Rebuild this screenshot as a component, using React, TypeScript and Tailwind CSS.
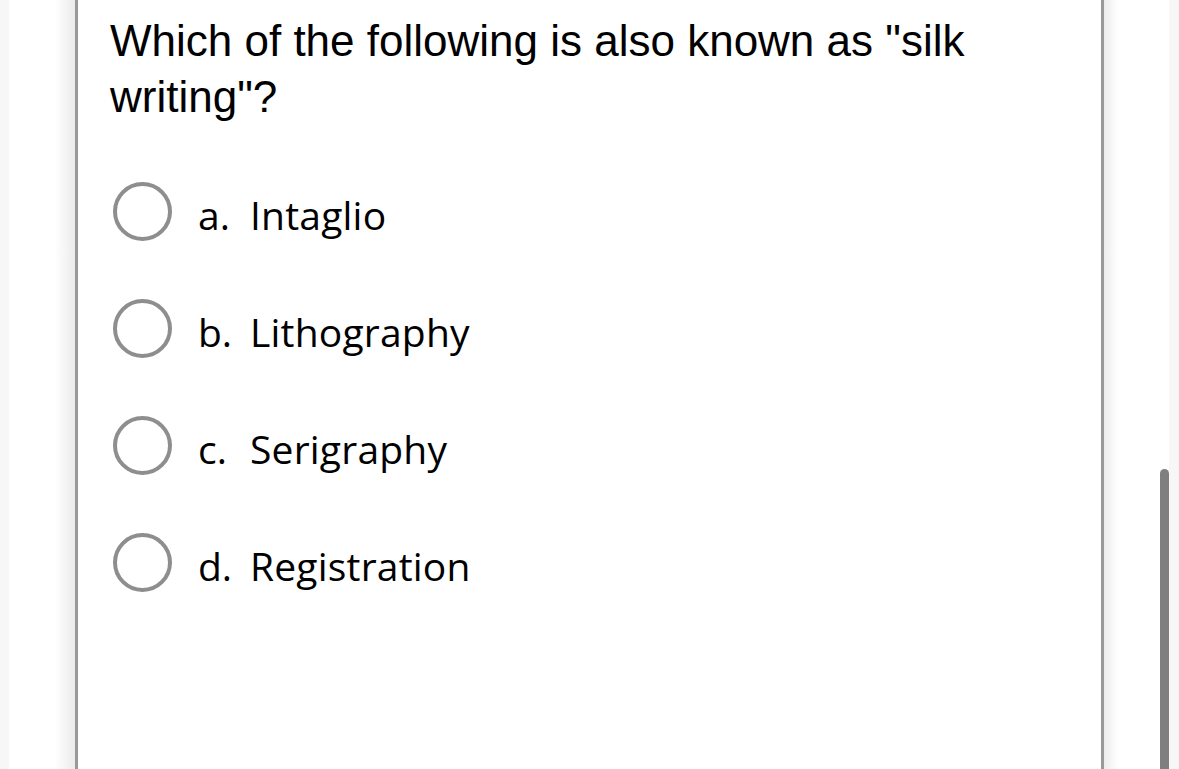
import React from 'react';

const options = [
  { key: 'a.', label: 'Intaglio' },
  { key: 'b.', label: 'Lithography' },
  { key: 'c.', label: 'Serigraphy' },
  { key: 'd.', label: 'Registration' },
];

const Radio = () => (
  <span className="w-[59px] h-[59px] rounded-full border-[4px] border-[#8e8e8e] bg-white shrink-0" />
);

export default function App() {
  return (
    <div className="flex h-[769px] w-full overflow-hidden bg-white">
      {/* left gutter */}
      <div className="flex w-[75px] shrink-0">
        <div className="w-[9px] bg-[#f7f7f7]" />
        <div className="flex-1 bg-[linear-gradient(to_right,#ffffff_70%,#ebebeb)]" />
      </div>

      {/* question card */}
      <div className="w-[1029px] shrink-0 border-x-[3px] border-[#999999] bg-white pl-[32px] pr-[40px] pt-[13px]">
        <p className="text-[44px] leading-[56px] text-black font-['Liberation_Sans',Arial,sans-serif]">
          Which of the following is also known as "silk writing"?
        </p>

        <div className="mt-[57px] flex flex-col gap-[58px]">
          {options.map((o) => (
            <div key={o.key} className="flex items-center h-[59px] pl-[3px]">
              <Radio />
              <span className="ml-[26px] pt-[7px] flex items-center text-[39px] text-black font-['Open_Sans',sans-serif]">
                <span className="w-[52px]">{o.key}</span>
                <span className="tracking-[0.2px]">{o.label}</span>
              </span>
            </div>
          ))}
        </div>
      </div>

      {/* right gutter with scrollbar */}
      <div className="flex flex-1">
        <div className="flex-1 bg-[linear-gradient(to_right,#ececec,#ffffff_25%)]" />
        <div className="w-[9px] flex flex-col pt-[469px]">
          <div className="flex-1 rounded-t-full bg-[#7f7f7f]" />
        </div>
        <div className="w-[10px] bg-[#f7f7f7]" />
      </div>
    </div>
  );
}
